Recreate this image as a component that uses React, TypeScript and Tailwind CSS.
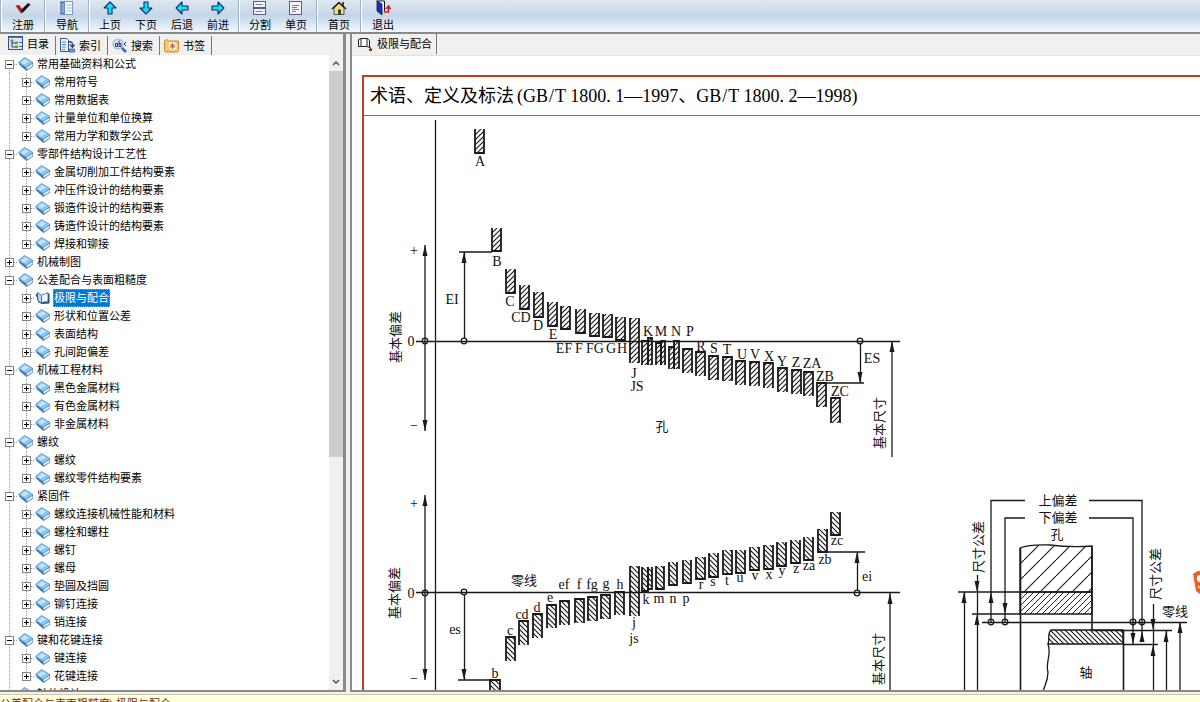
import { Fragment, useState } from "react";
import type { ReactNode } from "react";

type Chapter = { title: string; open: boolean; children: string[] };

const chapters: Chapter[] = [
  {
    title: "常用基础资料和公式",
    open: true,
    children: ["常用符号", "常用数据表", "计量单位和单位换算", "常用力学和数学公式"],
  },
  {
    title: "零部件结构设计工艺性",
    open: true,
    children: [
      "金属切削加工件结构要素",
      "冲压件设计的结构要素",
      "锻造件设计的结构要素",
      "铸造件设计的结构要素",
      "焊接和铆接",
    ],
  },
  { title: "机械制图", open: false, children: [] },
  {
    title: "公差配合与表面粗糙度",
    open: true,
    children: ["极限与配合", "形状和位置公差", "表面结构", "孔间距偏差"],
  },
  {
    title: "机械工程材料",
    open: true,
    children: ["黑色金属材料", "有色金属材料", "非金属材料"],
  },
  { title: "螺纹", open: true, children: ["螺纹", "螺纹零件结构要素"] },
  {
    title: "紧固件",
    open: true,
    children: [
      "螺纹连接机械性能和材料",
      "螺栓和螺柱",
      "螺钉",
      "螺母",
      "垫圆及挡圆",
      "铆钉连接",
      "销连接",
    ],
  },
  { title: "键和花键连接", open: true, children: ["键连接", "花键连接"] },
  { title: "轴的设计", open: true, children: [] },
];

/* ---------- toolbar ---------- */

function Arrow({ turn }: { turn: number }) {
  return (
    <svg width="16" height="16" viewBox="0 0 16 16">
      <path
        d="M8 2 L14 8 H10 V14 H6 V8 H2 Z"
        transform={`rotate(${turn} 8 8)`}
        fill="#14e0fa"
        stroke="#0b2a6b"
        strokeWidth="1.100"
        strokeLinejoin="round"
      />
    </svg>
  );
}

const toolIcons: Record<string, ReactNode> = {
  注册: (
    <svg width="16" height="16" viewBox="0 0 16 16">
      <path d="M0.500 5.500 L4 5 L7.500 9.500 L6 13.500 Z" fill="#c4131b" />
      <path d="M6 13.500 L7 9 L13 3 L15.500 4.500 L9 11.500 Z" fill="#151515" />
    </svg>
  ),
  导航: (
    <svg width="16" height="16" viewBox="0 0 16 16">
      <rect x="1.500" y="1.500" width="12" height="13" fill="#f3f7fd" stroke="#7e98c4" />
      <rect x="2" y="2" width="4" height="12" fill="#5f86c4" />
      <path d="M7.500 5h5M7.500 8h5M7.500 11h5" stroke="#a9bcdc" />
      <path d="M3 5h2M3 8h2M3 11h2" stroke="#dbe7f7" />
    </svg>
  ),
  上页: <Arrow turn={0} />,
  下页: <Arrow turn={180} />,
  后退: <Arrow turn={270} />,
  前进: <Arrow turn={90} />,
  分割: (
    <svg width="16" height="16" viewBox="0 0 16 16">
      <rect x="1.500" y="1.500" width="12" height="6" fill="#f3f3fc" stroke="#5a5a9e" />
      <rect x="1.500" y="8.500" width="12" height="6" fill="#f3f3fc" stroke="#5a5a9e" />
      <path d="M3.500 4.500h7M3.500 11.500h7" stroke="#7a7ab5" />
    </svg>
  ),
  单页: (
    <svg width="16" height="16" viewBox="0 0 16 16">
      <rect x="1.500" y="1.500" width="12" height="13" fill="#f3f3fc" stroke="#5a5a9e" />
      <path d="M4 5.500h7M4 7.500h5M4 9.500h7M4 11.500h4" stroke="#7a7ab5" />
    </svg>
  ),
  首页: (
    <svg width="16" height="16" viewBox="0 0 16 16">
      <path d="M11 2h2v4h-2z" fill="#8c2b1a" />
      <path d="M3 8v6.500h10V8L8 3z" fill="#f0dc85" stroke="#333" strokeWidth="0.800" />
      <path d="M1 9 L8 2.500 L15 9" fill="none" stroke="#222" strokeWidth="1.600" />
      <path d="M7 9.500h3v5H7z" fill="#36411f" />
    </svg>
  ),
  退出: (
    <svg width="16" height="16" viewBox="0 0 16 16">
      <path d="M1.500 1h8v10" fill="#fff" stroke="#111" />
      <path d="M2 1 L7 4 V15 L2 11 Z" fill="#1632c0" stroke="#0a1250" strokeWidth="0.800" />
      <path d="M9 12h4.500V7M11 9l2.500-3 2 3" fill="none" stroke="#d3202a" strokeWidth="1.600" />
    </svg>
  ),
};

const toolGroups = [
  ["注册"],
  ["导航"],
  ["上页", "下页", "后退", "前进"],
  ["分割", "单页"],
  ["首页"],
  ["退出"],
];

function Toolbar() {
  return (
    <div className="flex h-8 shrink-0 overflow-hidden bg-linear-to-b from-[#dfe7f0] via-[#c5d6e8] to-[#f1f8fe]">
      {toolGroups.map((group, i) => (
        <Fragment key={i}>
          <div className="w-[2px] border-l border-[#a3b3c6] bg-white" />
          <div className={group.length > 1 ? "flex px-[2px]" : "flex"}>
            {group.map((name) => (
              <button
                key={name}
                className={
                  "flex flex-col items-center justify-end leading-3 " +
                  (group.length > 1 ? "w-9" : "w-[42px]")
                }
              >
                <span className="block h-5">{toolIcons[name]}</span>
                <span className="pb-px">{name}</span>
              </button>
            ))}
          </div>
        </Fragment>
      ))}
    </div>
  );
}

/* ---------- contents tree ---------- */

function Expander({ open, first, last }: { open: boolean; first?: boolean; last?: boolean }) {
  return (
    <svg width="18" height="18" viewBox="0 0 18 18" className="shrink-0">
      <path
        d={`M9.500 ${first ? 9 : 0}V${last ? 9 : 18}M14 9.500H18`}
        stroke="#9a9a9a"
        strokeDasharray="1 1"
      />
      <rect x="5.500" y="5.500" width="8" height="8" fill="#fff" stroke="#848484" />
      <path d={open ? "M7 9.500h5" : "M7 9.500h5M9.500 7v5"} stroke="#000" />
    </svg>
  );
}

function ClosedBook() {
  return (
    <svg width="16" height="16" viewBox="0 0 16 16" className="shrink-0">
      <path d="M0.500 6.500 L6.500 1.500 L15 6.500 V10.500 L8.500 15 L1.500 9 Z" fill="#3a78b5" />
      <path d="M8.500 11.500 L14.500 7.800 V10 L8.700 13.800 Z" fill="#eef6fd" />
      <path d="M0.500 6.500 L6.500 1.500 L15 6.500 L8.300 11.500 Z" fill="#8ec5f0" stroke="#5c9bd3" strokeWidth="0.700" />
      <path d="M3 6.500 L7 3.200 L11 5.500 L6 8.800 Z" fill="#c6e4fb" />
    </svg>
  );
}

function OpenBook() {
  return (
    <svg width="16" height="16" viewBox="0 0 16 16" className="shrink-0">
      <path d="M0.500 4 L3.500 12.500 L7 14 L14.500 13.500 V4 L12.500 3 V12 H6 L3 4Z" fill="#234f86" />
      <path d="M2.500 2.500 L6.500 5 V13 L3 11 Z" fill="#b8d9f2" stroke="#2c5f99" strokeWidth="0.800" />
      <path d="M6.500 5.500 C8 3.500 10 5 13 2.500 V11 C10.500 12.500 9 11 6.500 13 Z" fill="#f2f8fd" stroke="#2c5f99" strokeWidth="0.800" />
    </svg>
  );
}

function ContentsTree() {
  const [selected, setSelected] = useState("极限与配合");

  return (
    <ul className="min-w-0 flex-1 overflow-hidden">
      {chapters.map((chapter, i) => (
        <li key={chapter.title}>
          <button className="flex h-[18px] items-center">
            <Expander open={chapter.open} first={i === 0} />
            <ClosedBook />
            <span className="ml-[3px] leading-4 whitespace-nowrap">{chapter.title}</span>
          </button>
          <ul className="bg-[repeating-linear-gradient(#9a9a9a_0_1px,transparent_1px_2px)] bg-[length:1px_100%] bg-[position:9px_0] bg-no-repeat pl-[17px]">
            {chapter.children.map((name, n) => (
              <li key={name}>
                <button
                  className="flex h-[18px] items-center"
                  onClick={() => setSelected(name)}
                >
                  <Expander open={false} last={n === chapter.children.length - 1} />
                  {name === selected ? <OpenBook /> : <ClosedBook />}
                  <span
                    className={
                      "ml-[2px] px-px leading-[18px] whitespace-nowrap " +
                      (name === selected
                        ? "bg-[#0078d7] text-white outline-1 -outline-offset-1 outline-dotted outline-[#ff8728]"
                        : "")
                    }
                  >
                    {name}
                  </span>
                </button>
              </li>
            ))}
          </ul>
        </li>
      ))}
    </ul>
  );
}

function ScrollBar() {
  return (
    <div className="flex w-[14px] shrink-0 flex-col bg-[#f0f0f0]">
      <button aria-label="向上滚动" className="flex h-4 items-center justify-center">
        <svg width="8" height="6" viewBox="0 0 8 6">
          <path d="M1 5 L4 2 L7 5" fill="none" stroke="#505050" strokeWidth="1.500" />
        </svg>
      </button>
      <div className="flex-1">
        <div className="h-[64%] bg-[#cdcdcd]" />
      </div>
      <button aria-label="向下滚动" className="flex h-4 items-center justify-center">
        <svg width="8" height="6" viewBox="0 0 8 6">
          <path d="M1 1 L4 4 L7 1" fill="none" stroke="#505050" strokeWidth="1.500" />
        </svg>
      </button>
    </div>
  );
}

const tabs = [
  {
    name: "目录",
    icon: (
      <svg width="15" height="15" viewBox="0 0 15 15">
        <rect x="0.500" y="0.500" width="14" height="13" fill="#d9e7f7" stroke="#2c5390" />
        <path d="M1 1.500h13" stroke="#4a78bd" />
        <path d="M4 4v7M4 7h3M4 11h3" stroke="#345" fill="none" />
        <path d="M2.500 3.500h3v2.500h-3zM7 5.500h3V8H7zM7 9.500h3V12H7z" fill="#7a9a35" />
        <path d="M11 6.500h3M11 10.500h3" stroke="#3c67a8" />
      </svg>
    ),
  },
  {
    name: "索引",
    icon: (
      <svg width="15" height="15" viewBox="0 0 15 15">
        <path d="M0.500 0.500h6l2 2v11h-8z" fill="#eef4fb" stroke="#33568f" />
        <path d="M2 4h4M2 6.500h4M2 9h4M2 11.500h3" stroke="#5a80bb" />
        <path d="M8 4c4-1 5 1 4.500 5M10 6.500l2.500 3 2-3" fill="none" stroke="#27467c" strokeWidth="1.300" />
        <path d="M9.500 11h5v3h-5z" fill="#7d9fd4" stroke="#33568f" strokeWidth="0.800" />
      </svg>
    ),
  },
  {
    name: "搜索",
    icon: (
      <svg width="15" height="15" viewBox="0 0 15 15">
        <circle cx="6" cy="6" r="5" fill="#d8e8f8" stroke="#9db5d0" strokeWidth="1.200" />
        <path d="M10 10l4 4" stroke="#3d70b3" strokeWidth="2.600" />
        <path d="M3.500 5.500h2v3h-2zM7 2.500v6h2v-3H7M14 4l-2 2 2 2" fill="none" stroke="#1c3566" />
      </svg>
    ),
  },
  {
    name: "书签",
    icon: (
      <svg width="15" height="15" viewBox="0 0 15 15">
        <path d="M0.500 3c0-1.500 4.500-1.500 5 0h9v9.500c0 1-1 1.500-2 1.500h-10c-1 0-2-.5-2-1.500z" fill="#f3c969" stroke="#c18b2a" />
        <path d="M8.500 4v8M4.500 8h8M5.500 5l6 6M11.500 5l-6 6" stroke="#fff" strokeWidth="2" />
        <path d="M8.500 5v6M5.500 8h6M6.500 6l4 4M10.500 6l-4 4" stroke="#a0522d" strokeWidth="0.900" />
      </svg>
    ),
  },
];

function Sidebar() {
  const [active, setActive] = useState("目录");

  return (
    <aside className="flex w-[346px] shrink-0 flex-col border-r-[3px] border-b-2 border-[#8a8a8a] bg-[#f0f0f0]">
      <div role="tablist" className="flex h-[21px] shrink-0 items-end pl-1">
        {tabs.map((tab) => (
          <button
            key={tab.name}
            role="tab"
            aria-selected={tab.name === active}
            onClick={() => setActive(tab.name)}
            className={
              "flex h-[19px] gap-1 border-r border-[#777] pr-[6px] pl-1 " +
              (tab.name === active ? "items-start" : "items-center")
            }
          >
            {tab.icon}
            <span className="leading-4">{tab.name}</span>
          </button>
        ))}
      </div>
      <div className="flex min-h-0 flex-1 bg-white">
        <ContentsTree />
        <ScrollBar />
      </div>
    </aside>
  );
}

/* ---------- deviation chart ---------- */

// [left, top, right, bottom]
type Box = [number, number, number, number];

const holeOpenTop: Box[] = [
  [475, 129, 484, 153], [492, 228, 501, 251], [506, 269, 515, 293], [520, 285, 529, 309],
  [534, 292, 543, 317], [548, 302, 557, 326], [561, 306, 570, 329], [576, 309, 585, 333],
  [590, 313, 599, 336], [603, 314, 612, 337], [616, 317, 625, 340],
];

const holeOpenBottom: Box[] = [
  [642, 341, 648, 365], [648, 338, 652, 365], [656, 343, 661, 365], [661, 341, 665, 365],
  [669, 347, 674, 369], [674, 341, 679, 369], [683, 349, 692, 373], [696, 352, 705, 376],
  [709, 356, 718, 380], [723, 357, 732, 381], [736, 361, 745, 385], [750, 362, 759, 386],
  [764, 363, 773, 388], [778, 368, 787, 392], [792, 370, 801, 394], [804, 372, 813, 396],
  [817, 383, 826, 407], [831, 398, 840, 423],
];

const shaftOpenBottom: Box[] = [
  [490, 680, 500, 704], [506, 637, 515, 661], [519, 621, 528, 645], [533, 614, 542, 638],
  [547, 605, 556, 628], [560, 601, 569, 625], [575, 599, 584, 623], [588, 597, 597, 621],
  [601, 595, 610, 619], [615, 592, 624, 615],
];

const shaftOpenTop: Box[] = [
  [642, 567, 648, 591], [648, 567, 652, 589], [656, 566, 664, 589], [669, 562, 677, 585],
  [683, 560, 691, 583], [696, 557, 705, 579], [709, 553, 718, 577], [723, 550, 732, 574],
  [736, 550, 745, 573], [750, 547, 759, 570], [764, 545, 773, 569], [777, 542, 786, 566],
  [791, 540, 800, 563], [804, 537, 813, 560], [818, 529, 827, 552], [831, 512, 840, 535],
];

// [text, middle x, baseline y]
type Label = [string, number, number];

const latinLabels: Label[] = [
  ["A", 480, 166], ["B", 497, 266], ["C", 510, 306], ["CD", 521, 322], ["D", 538, 330],
  ["E", 553, 339], ["EF", 564, 353], ["F", 579, 353], ["FG", 595, 353], ["G", 611, 353],
  ["H", 622, 353], ["J", 634, 378], ["JS", 637, 391], ["K", 648, 336], ["M", 661, 336],
  ["N", 676, 336], ["P", 690, 336], ["R", 701, 351], ["S", 714, 353], ["T", 727, 354],
  ["U", 742, 359], ["V", 755, 359], ["X", 769, 361], ["Y", 782, 366], ["Z", 796, 367],
  ["ZA", 812, 368], ["ZB", 825, 381], ["ZC", 840, 396], ["EI", 452, 304], ["ES", 872, 363],
  ["0", 411, 346], ["+", 414, 255], ["−", 414, 430],
  ["b", 495, 678], ["c", 510, 635], ["cd", 522, 619], ["d", 537, 612], ["e", 550, 602],
  ["ef", 564, 589], ["f", 579, 589], ["fg", 592, 589], ["g", 606, 588], ["h", 620, 589],
  ["j", 634, 627], ["js", 634, 643], ["k", 646, 604], ["m", 659, 603], ["n", 673, 603],
  ["p", 686, 603], ["r", 701, 589], ["s", 713, 586], ["t", 727, 585], ["u", 740, 582],
  ["v", 755, 580], ["x", 769, 579], ["y", 782, 575], ["z", 796, 573], ["za", 809, 570],
  ["zb", 825, 564], ["zc", 837, 545], ["es", 455, 634], ["ei", 867, 581],
  ["0", 411, 598], ["+", 414, 508], ["−", 414, 683],
];

const chineseLabels: Label[] = [
  ["孔", 662, 431], ["零线", 524, 585], ["上偏差", 1058, 505], ["下偏差", 1058, 522],
  ["孔", 1057, 539], ["零线", 1175, 616], ["轴", 1086, 677],
];

// [text, centre x, centre y]
const verticalLabels: Label[] = [
  ["基本偏差", 395, 337], ["基本偏差", 394, 593], ["基本尺寸", 879, 423],
  ["基本尺寸", 878, 659], ["尺寸公差", 978, 547], ["尺寸公差", 1155, 574],
];

const circles = [
  [425, 341], [464, 341], [860, 341], [425, 593], [464, 592], [857, 593],
  [991, 622], [1005, 622], [1133, 622], [1142, 622],
];

// tips of the arrow heads: [x, y, direction]
const heads: [number, number, 1 | -1][] = [
  [425, 245, 1], [425, 431, -1], [464, 252, 1], [860, 383, -1], [892, 341, 1],
  [425, 495, 1], [425, 680, -1], [464, 680, -1], [857, 552, 1], [890, 593, 1],
  [964, 592, 1], [977, 592, -1], [977, 614, 1], [991, 592, 1], [1005, 614, -1],
  [1133, 644, -1], [1142, 631, 1], [1153, 630, -1], [1153, 645, 1], [1166, 631, 1],
  [1180, 622, 1],
];

function bars(boxes: Box[], open: "top" | "bottom", fill: string) {
  return boxes.map(([l, t, r, b]) => (
    <path
      key={`${l}-${t}`}
      d={open === "top" ? `M${l} ${t}V${b}H${r}V${t}` : `M${l} ${b}V${t}H${r}V${b}`}
      fill={fill}
      strokeWidth="1.800"
    />
  ));
}

function DeviationChart() {
  return (
    <svg
      width="836"
      height="588"
      viewBox="364 116 836 588"
      className="shrink-0"
      fill="none"
      stroke="#1a1a1a"
      strokeWidth="1.300"
    >
      <defs>
        <pattern id="rise" width="5" height="5" patternUnits="userSpaceOnUse">
          <path d="M-1 6L6 -1M-1 1L1 -1M4 6L6 4" stroke="#111" strokeWidth="1.100" />
        </pattern>
        <pattern id="fall" width="5" height="5" patternUnits="userSpaceOnUse">
          <path d="M-1 -1L6 6M-1 4L1 6M4 -1L6 1" stroke="#111" strokeWidth="1.100" />
        </pattern>
        <pattern id="wide" width="16" height="16" patternUnits="userSpaceOnUse">
          <path d="M-1 17L17 -1" stroke="#222" strokeWidth="1.200" />
        </pattern>
        <pattern id="medium" width="6" height="6" patternUnits="userSpaceOnUse">
          <path d="M-1 7L7 -1M-1 1L1 -1M5 7L7 5" stroke="#222" strokeWidth="1" />
        </pattern>
      </defs>

      {/* axes */}
      <path d="M435.500 120V704M425 245V431M425 495V680M416 341.500H900M416 592.500H900" />
      <path d="M464.500 252V338M459 252H492M860.500 344V383M826 383H864M892 341V457" />
      <path d="M464.500 595V680M458 680H490M857.500 552V590M826 552H865M890 593V704" />

      {bars(holeOpenTop, "top", "url(#rise)")}
      {bars(holeOpenBottom, "bottom", "url(#rise)")}
      {bars(shaftOpenBottom, "bottom", "url(#fall)")}
      {bars(shaftOpenTop, "top", "url(#fall)")}
      <rect x="630" y="318" width="9" height="45" fill="url(#rise)" stroke="none" />
      <rect x="630" y="566" width="9" height="50" fill="url(#fall)" stroke="none" />
      <path d="M630 318V363M639 318V363M630 566V616M639 566V616" strokeWidth="1.800" />

      {/* hole and shaft section */}
      <path d="M1020 548C1030 544 1042 545 1050 545C1066 547 1078 547 1092 546V592H1020Z" fill="url(#wide)" />
      <path d="M1020 592H1092V614H1020Z" fill="url(#medium)" />
      <path d="M1020.500 548V704M1092 546V630M1123.500 630V704" strokeWidth="1.600" />
      <path d="M1051 630H1123V644H1048C1050 638 1047 634 1051 630Z" fill="url(#fall)" />
      <path d="M1048 644C1052 655 1045 662 1048 672C1048 682 1044 686 1043 692" />
      <path d="M958 592H1020M972 614H1020M982 622.500H1187M1092 630.500H1172M1123 644.500H1158" />
      <path d="M1025 500.500H991V622M1025 518H1005V622M1089 500.500H1142V641M1089 518H1133V644" />
      <path d="M964.500 592V704M977.500 575V704M1153.500 604V704M1166.500 631V704M1180 622V704" />

      {circles.map(([x, y]) => (
        <circle key={`${x}-${y}`} cx={x} cy={y} r="2.800" />
      ))}
      {heads.map(([x, y, dir]) => (
        <path
          key={`${x}-${y}`}
          d={`M${x} ${y}L${x - 2.5} ${y + 11 * dir}H${x + 2.5}Z`}
          fill="#1a1a1a"
          stroke="none"
        />
      ))}

      <g
        fill="#111"
        stroke="none"
        textAnchor="middle"
        className="font-['Liberation_Serif','Noto_Sans_CJK_SC',serif] text-[14px]"
      >
        {latinLabels.map(([text, x, y]) => (
          <text key={`${text}-${y}`} x={x} y={y}>
            {text}
          </text>
        ))}
      </g>
      <g
        fill="#111"
        stroke="none"
        textAnchor="middle"
        className="font-['Noto_Sans_CJK_SC',sans-serif] text-[13px]"
      >
        {chineseLabels.map(([text, x, y]) => (
          <text key={`${text}-${x}`} x={x} y={y}>
            {text}
          </text>
        ))}
        {verticalLabels.map(([text, x, y]) => (
          <text key={`${text}-${y}`} transform={`translate(${x + 5} ${y}) rotate(-90)`}>
            {text}
          </text>
        ))}
      </g>

      {/* floating input-method badge, half off screen */}
      <g stroke="none">
        <path d="M1193 574L1198 571H1204V594H1200L1196 591Z" fill="#f0592b" />
        <path d="M1197 577C1198 574 1202 575 1203 577V582C1199 583 1196 581 1197 577Z" fill="#fff" />
        <circle cx="1199" cy="587" r="1.500" fill="#ffd23c" />
      </g>
    </svg>
  );
}

function PageTabIcon() {
  return (
    <svg width="15" height="15" viewBox="0 0 15 15">
      <path d="M0.500 2.500L3 1.500V9.500H0.500ZM3 1.500H9L11.500 3.500V10H9.500L9 9.500H3M9 1.500V9.500" fill="#fff" stroke="#222" />
      <path d="M11 9l2 3" stroke="#222" strokeWidth="1.300" />
      <path d="M11 12h3v2h-3z" fill="#a8231c" />
    </svg>
  );
}

function DocumentPane() {
  return (
    <main className="ml-1 flex min-w-0 flex-1 flex-col border-b-2 border-l-2 border-[#8a8a8a] bg-white">
      <div role="tablist" className="flex h-[22px] shrink-0 border-b border-[#e2e2e2] bg-[#f0f0f0] pl-[6px]">
        <button
          role="tab"
          aria-selected="true"
          className="flex h-5 items-center gap-1 border-r border-[#777] pr-1"
        >
          <PageTabIcon />
          <span className="leading-4">极限与配合</span>
        </button>
      </div>
      <div className="flex min-h-0 flex-1 flex-col overflow-hidden pt-[19px] pl-[10px]">
        <article className="flex flex-col border-t-2 border-l-2 border-[#c83a1e]">
          <h1 className="shrink-0 border-b border-b-[#d4512f] pl-[6px] font-['Liberation_Serif','Noto_Sans_CJK_SC',serif] text-[18px] leading-[38px] whitespace-nowrap">
            术语、定义及标法<span className="pl-[3px]">(</span>GB
            <span className="px-px">/</span>T 1800. 1—1997、GB
            <span className="px-px">/</span>T 1800. 2—1998)
          </h1>
          <DeviationChart />
        </article>
      </div>
    </main>
  );
}

export default function App() {
  return (
    <div className="flex h-screen flex-col overflow-hidden bg-[#f0f0f0] font-['Liberation_Sans','Noto_Sans_CJK_SC',sans-serif] text-[11px] text-black">
      <Toolbar />
      <div className="flex min-h-0 flex-1 border-t-2 border-[#8a8a8a]">
        <Sidebar />
        <DocumentPane />
      </div>
      <footer className="mt-[2px] h-2 shrink-0 overflow-hidden border-t border-[#c9c9b4] bg-[#ffffd9] leading-[18px] whitespace-nowrap text-[#7a2a12]">
        公差配合与表面粗糙度\ 极限与配合
      </footer>
    </div>
  );
}
